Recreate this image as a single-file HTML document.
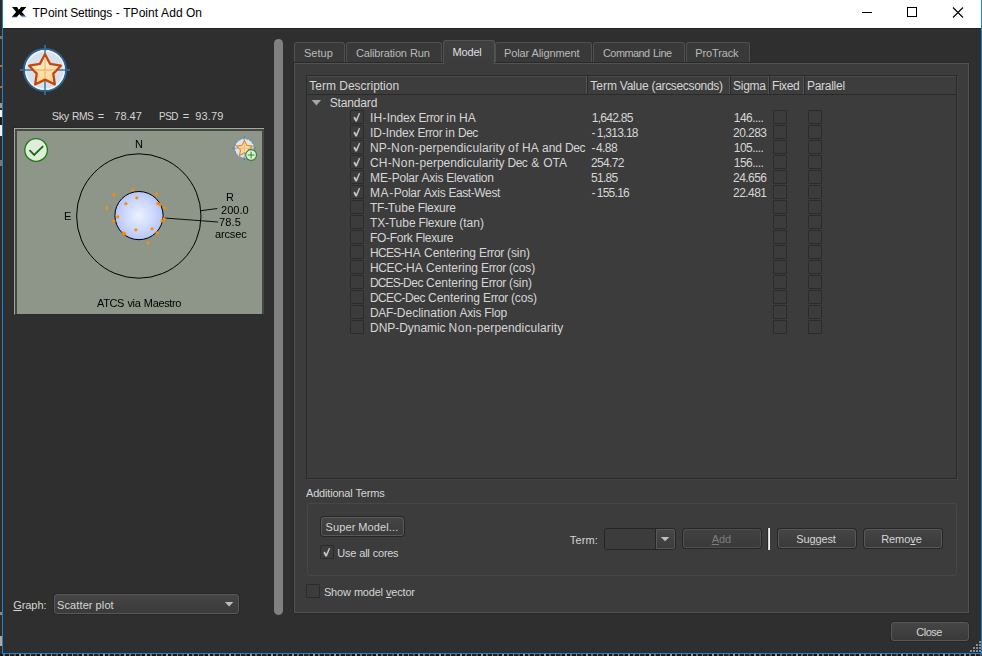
<!DOCTYPE html>
<html><head><meta charset="utf-8"><title>TPoint Settings</title>
<style>
html,body{margin:0;padding:0;}
body{width:982px;height:656px;position:relative;overflow:hidden;background:#2b2b2b;font-family:"Liberation Sans",sans-serif;font-size:12px;}
.a{position:absolute;box-sizing:border-box;}
.t{position:absolute;white-space:pre;line-height:16px;height:16px;font-size:12px;}
.t u{text-decoration:underline;text-underline-offset:1px;}
#win{left:2px;top:0;width:980px;height:654px;background:#2f2f2f;border:1px solid #1883d7;border-top:none;}
#title{left:3px;top:0;width:978px;height:28px;background:#ffffff;box-shadow:0 1px 0 #232323;}
.tab{background:#393939;border:1px solid #505050;border-bottom:none;border-radius:3px 3px 0 0;top:42px;height:20px;}
.tab.sel{background:linear-gradient(#404040,#3c3c3c);top:40px;height:24px;border-color:#545454;}
#pane{left:294px;top:63px;width:675px;height:550px;background:#3c3c3c;border:1px solid #525252;box-shadow:0 0 0 1px #292929;}
#tree{left:306px;top:75px;width:651px;height:404px;background:#3c3c3c;border:1px solid #2a2a2a;box-shadow:1px 1px 0 #434343;}
#hdr{left:307px;top:76px;width:649px;height:18px;background:#3d3d3d;border-top:1px solid #4b4b4b;}
#hdrline{left:307px;top:94px;width:649px;height:1px;background:#2a2a2a;}
.sep{top:76px;width:1px;height:18px;background:#2a2a2a;box-shadow:-1px 0 0 #555555;}
.cb{width:14px;height:14px;background:#3c3c3c;border:1px solid #2b2b2b;border-radius:1px;}
.btn{background:linear-gradient(#454545,#3a3a3a);border:1px solid #585858;border-radius:3px;box-shadow:0 0 0 1px #272727;width:78px;height:19px;}
.btn.dis{border-color:#4f4f4f;background:linear-gradient(#414141,#3a3a3a);}
#grp{left:307px;top:503px;width:650px;height:73px;border:1px solid #474747;border-radius:3px;}
#split{left:274px;top:39px;width:9px;height:576px;background:#808080;border-radius:4.5px;}
#plot{left:14px;top:128px;width:250px;height:187px;background:#434843;border-left:1px solid #a2a99e;border-top:1px solid #a2a99e;box-shadow:-1px -1px 0 #292929;border-bottom:1px solid #2b2d2a;}
#plot2{left:17px;top:131px;width:245px;height:183px;background:#8e968a;}
.combo{background:linear-gradient(#454545,#3a3a3a);border:1px solid #585858;border-radius:3px;box-shadow:0 0 0 1px #272727;}
.ecombo{background:#3c3c3c;border:1px solid #252525;border-radius:3px;}
.dd{background:linear-gradient(#474747,#3c3c3c);border:1px solid #585858;border-radius:0 2px 2px 0;}
svg{position:absolute;overflow:visible;}
#lstrip{left:0;top:0;width:2px;height:654px;background:linear-gradient(to bottom,#2b2b2b 0,#2b2b2b 36px,#777 36px,#777 39px,#2b2b2b 39px,#2b2b2b 65px,#b06a30 65px,#b06a30 67px,#2b2b2b 67px,#2b2b2b 86px,#b06a30 86px,#b06a30 88px,#2b2b2b 88px,#2b2b2b 103px,#999 103px,#999 108px,#2b2b2b 108px,#2b2b2b 110px,#f2f2f2 110px,#f2f2f2 117px,#1c1c1c 117px,#1c1c1c 125px,#f2f2f2 125px,#f2f2f2 136px,#2b2b2b 136px,#2b2b2b 160px,#777 160px,#777 166px,#2b2b2b 166px,#2b2b2b 612px,#888 612px,#888 615px,#2b2b2b 615px,#2b2b2b 636px,#aaa 636px,#aaa 646px,#2b2b2b 646px);}
#bstrip{left:0;top:654px;width:982px;height:2px;background:repeating-linear-gradient(90deg,#141414 0,#141414 3px,#707070 3px,#707070 5px,#1a1a1a 5px,#1a1a1a 9px,#8c8c8c 9px,#8c8c8c 10px,#222 10px,#222 14px,#555 14px,#555 16px,#101010 16px,#101010 19px,#9a9a9a 19px,#9a9a9a 21px);}
.g{will-change:transform;}

</style></head>
<body>
<div class="a" id="win"></div>
<div class="a" id="lstrip"></div><div class="a" id="bstrip"></div>
<div class="a" id="title"></div>
<!-- title icon + buttons -->
<svg style="left:0;top:0" width="982" height="28" viewBox="0 0 982 28">
  <defs><linearGradient id="gx" x1="0" y1="7" x2="0" y2="17.3" gradientUnits="userSpaceOnUse"><stop offset="0" stop-color="#000"/><stop offset="0.62" stop-color="#000"/><stop offset="0.78" stop-color="#14143c"/><stop offset="0.9" stop-color="#6a8fd2"/><stop offset="1" stop-color="#8db0dc"/></linearGradient>
  <linearGradient id="gx2" x1="0" y1="7" x2="0" y2="17.3" gradientUnits="userSpaceOnUse"><stop offset="0" stop-color="#000"/><stop offset="0.85" stop-color="#000"/><stop offset="1" stop-color="#4060a8"/></linearGradient></defs>
  <path d="M12 7 L17.1 7 L18.9 9.9 L21.3 7 L26.1 7 L21.8 12.1 L26.6 17.2 L22.1 17.2 L19.1 13.9 L16.7 17.2 L11.7 17.2 L16.2 12.1 Z" fill="url(#gx)"/>
  <path d="M18.9 9.9 L21.3 7 L26.1 7 L21.8 12.1 L19.1 13.9 L16.7 17.2 L11.7 17.2 L16.2 12.1 Z" fill="url(#gx2)"/>
  <path d="M862 12.5 H872" stroke="#000" stroke-width="1"/>
  <rect x="907.5" y="7.5" width="9" height="9" fill="none" stroke="#000" stroke-width="1"/>
  <path d="M953 7.5 L963 17.5 M963 7.5 L953 17.5" stroke="#000" stroke-width="1.1"/>
</svg>
<!-- left icon -->
<svg style="left:19px;top:44px" width="52" height="52" viewBox="-26 -26 52 52">
  <defs>
  <linearGradient id="gs" x1="0" y1="0" x2="0" y2="1"><stop offset="0" stop-color="#fff3e0"/><stop offset="1" stop-color="#ffd490"/></linearGradient></defs>
  <path d="M0 -25 V25 M-25 0 H25" stroke="#3f78a5" stroke-width="1.5"/>
  <circle cx="0" cy="0" r="21" fill="#d6e3ee" stroke="#2e6492" stroke-width="2"/>
  <circle cx="0" cy="0" r="19.2" fill="none" stroke="#f6f9fc" stroke-width="1.2"/>
  <path d="M0 -20 V20 M-20 0 H20" stroke="#3f78a5" stroke-width="1.5"/>
  <path d="M0.00 -15.80 L5.11 -6.14 L15.88 -4.26 L8.27 3.59 L9.82 14.41 L0.00 9.60 L-9.82 14.41 L-8.27 3.59 L-15.88 -4.26 L-5.11 -6.14 Z" fill="url(#gs)" stroke="#c9460a" stroke-width="2.3" stroke-linejoin="round"/>
  <path d="M0 -11 V7.5 M-10.5 0 H10.5" stroke="#f3b25e" stroke-width="1.3" opacity="0.85"/>
</svg>
<!-- splitter -->
<div class="a" id="split"></div>
<!-- plot -->
<div class="a" id="plot"></div><div class="a" id="plot2"></div>
<svg style="left:0;top:0" width="982" height="656" viewBox="0 0 982 656">
  <defs><radialGradient id="gb" cx="50%" cy="50%" r="50%"><stop offset="0" stop-color="#ebf1fe"/><stop offset="0.55" stop-color="#d0dbfc"/><stop offset="1" stop-color="#b6c5f7"/></radialGradient></defs>
  <circle cx="138.8" cy="216" r="62.2" fill="none" stroke="#000" stroke-width="1"/>
  <circle cx="139" cy="215.6" r="24.1" fill="url(#gb)" stroke="#000" stroke-width="1"/>
  <path d="M201 210.7 L217.3 208.5 M164.4 218 L218 222" stroke="#000" stroke-width="0.9" fill="none"/>
  <g fill="#ff8c00">
   <circle cx="132.7" cy="189.8" r="1.6"/><circle cx="113.9" cy="194.9" r="1.6"/><circle cx="156.8" cy="193.9" r="1.6"/>
   <circle cx="136.8" cy="197.8" r="1.6"/><circle cx="125.9" cy="203.7" r="1.6"/><circle cx="157.8" cy="203.4" r="1.6"/><circle cx="159.6" cy="204.6" r="1.6"/>
   <circle cx="164.9" cy="207.8" r="1.6"/><circle cx="106.8" cy="208" r="1.6"/><circle cx="117.8" cy="216.8" r="1.6"/>
   <circle cx="113.9" cy="221" r="1.6"/><circle cx="164.1" cy="218.8" r="1.6"/><circle cx="162" cy="221" r="1.6"/>
   <circle cx="135.9" cy="229.8" r="1.6"/><circle cx="152" cy="228.8" r="1.6"/><circle cx="157.1" cy="232.9" r="1.6"/>
   <circle cx="123.6" cy="232.8" r="1.6"/><circle cx="124.8" cy="233.8" r="1.6"/><circle cx="147.8" cy="242.9" r="1.6"/>
  </g>
  <!-- check icon -->
  <circle cx="36.1" cy="150" r="11.3" fill="#dfeedb" stroke="#1f7a12" stroke-width="1.3"/>
  <path d="M29.5 150.2 L34.2 155 L43.2 146.2" fill="none" stroke="#146b0a" stroke-width="1.8"/>
  <!-- small star icon -->
  <g transform="translate(244.4,148.3)">
   <path d="M0 -12.5 V12 M-12.2 0 H11.5" stroke="#4a82b0" stroke-width="0.9"/>
   <circle cx="0" cy="0" r="9.7" fill="#dbe6f0" stroke="#5c90bc" stroke-width="1" stroke-dasharray="2.4 1.2"/>
   <path d="M0 -9.4 V9.4 M-9.4 0 H9.4" stroke="#7aa4c8" stroke-width="0.8"/>
   <path d="M0.00 -7.90 L2.41 -2.92 L7.89 -2.16 L3.90 1.67 L4.88 7.11 L0.00 4.50 L-4.88 7.11 L-3.90 1.67 L-7.89 -2.16 L-2.41 -2.92 Z" fill="#ffdfb4" stroke="#e9821e" stroke-width="1.1" stroke-linejoin="round"/>
   <path d="M0 -5.5 V3.6 M-5.5 0 H5.5" stroke="#f5b468" stroke-width="0.9"/>
   <circle cx="6.7" cy="6.7" r="5.4" fill="#dcedd8" stroke="#2c8222" stroke-width="1.1"/>
   <path d="M6.7 3.4 V10 M3.4 6.7 H10" stroke="#2f8a24" stroke-width="1"/>
  </g>
</svg>
<!-- graph combo -->
<div class="a combo" style="left:54px;top:594px;width:185px;height:20px;"></div>
<svg style="left:0;top:0" width="982" height="656"><path d="M224.9 602 H233.3 L229.1 606.4 Z" fill="#bdbdbd"/></svg>
<!-- tabs -->
<div class="a tab" style="left:294px;width:51px;"></div>
<div class="a tab" style="left:346px;width:96px;"></div>
<div class="a tab" style="left:495px;width:97px;"></div>
<div class="a tab" style="left:593px;width:92px;"></div>
<div class="a tab" style="left:686px;width:64px;"></div>
<div class="a" id="pane"></div>
<div class="a tab sel" style="left:443px;width:52px;"></div>
<!-- tree -->
<div class="a" id="tree"></div>
<div class="a" id="hdr"></div><div class="a" id="hdrline"></div>
<div class="a sep" style="left:587px"></div>
<div class="a sep" style="left:730px"></div>
<div class="a sep" style="left:769px"></div>
<div class="a sep" style="left:804px"></div>
<svg style="left:0;top:0" width="982" height="656"><path d="M311.7 100 H321.1 L316.4 105.4 Z" fill="#a6a6a6"/></svg>
<div class="a cb on" style="left:350px;top:110px"></div>
<svg style="left:350px;top:110px" width="14" height="14" viewBox="0 0 14 14"><path d="M3.4 7.7 L4.9 6.5 L6.2 9.0 L8.9 3.0 L10.2 3.3 L6.9 11.6 L5.4 11.6 Z" fill="#c6c6c6"/></svg>
<div class="a cb" style="left:773px;top:110px"></div>
<div class="a cb" style="left:808px;top:110px"></div>
<div class="a cb on" style="left:350px;top:125px"></div>
<svg style="left:350px;top:125px" width="14" height="14" viewBox="0 0 14 14"><path d="M3.4 7.7 L4.9 6.5 L6.2 9.0 L8.9 3.0 L10.2 3.3 L6.9 11.6 L5.4 11.6 Z" fill="#c6c6c6"/></svg>
<div class="a cb" style="left:773px;top:125px"></div>
<div class="a cb" style="left:808px;top:125px"></div>
<div class="a cb on" style="left:350px;top:140px"></div>
<svg style="left:350px;top:140px" width="14" height="14" viewBox="0 0 14 14"><path d="M3.4 7.7 L4.9 6.5 L6.2 9.0 L8.9 3.0 L10.2 3.3 L6.9 11.6 L5.4 11.6 Z" fill="#c6c6c6"/></svg>
<div class="a cb" style="left:773px;top:140px"></div>
<div class="a cb" style="left:808px;top:140px"></div>
<div class="a cb on" style="left:350px;top:155px"></div>
<svg style="left:350px;top:155px" width="14" height="14" viewBox="0 0 14 14"><path d="M3.4 7.7 L4.9 6.5 L6.2 9.0 L8.9 3.0 L10.2 3.3 L6.9 11.6 L5.4 11.6 Z" fill="#c6c6c6"/></svg>
<div class="a cb" style="left:773px;top:155px"></div>
<div class="a cb" style="left:808px;top:155px"></div>
<div class="a cb on" style="left:350px;top:170px"></div>
<svg style="left:350px;top:170px" width="14" height="14" viewBox="0 0 14 14"><path d="M3.4 7.7 L4.9 6.5 L6.2 9.0 L8.9 3.0 L10.2 3.3 L6.9 11.6 L5.4 11.6 Z" fill="#c6c6c6"/></svg>
<div class="a cb" style="left:773px;top:170px"></div>
<div class="a cb" style="left:808px;top:170px"></div>
<div class="a cb on" style="left:350px;top:185px"></div>
<svg style="left:350px;top:185px" width="14" height="14" viewBox="0 0 14 14"><path d="M3.4 7.7 L4.9 6.5 L6.2 9.0 L8.9 3.0 L10.2 3.3 L6.9 11.6 L5.4 11.6 Z" fill="#c6c6c6"/></svg>
<div class="a cb" style="left:773px;top:185px"></div>
<div class="a cb" style="left:808px;top:185px"></div>
<div class="a cb" style="left:350px;top:200px"></div>
<div class="a cb" style="left:773px;top:200px"></div>
<div class="a cb" style="left:808px;top:200px"></div>
<div class="a cb" style="left:350px;top:215px"></div>
<div class="a cb" style="left:773px;top:215px"></div>
<div class="a cb" style="left:808px;top:215px"></div>
<div class="a cb" style="left:350px;top:230px"></div>
<div class="a cb" style="left:773px;top:230px"></div>
<div class="a cb" style="left:808px;top:230px"></div>
<div class="a cb" style="left:350px;top:245px"></div>
<div class="a cb" style="left:773px;top:245px"></div>
<div class="a cb" style="left:808px;top:245px"></div>
<div class="a cb" style="left:350px;top:260px"></div>
<div class="a cb" style="left:773px;top:260px"></div>
<div class="a cb" style="left:808px;top:260px"></div>
<div class="a cb" style="left:350px;top:275px"></div>
<div class="a cb" style="left:773px;top:275px"></div>
<div class="a cb" style="left:808px;top:275px"></div>
<div class="a cb" style="left:350px;top:290px"></div>
<div class="a cb" style="left:773px;top:290px"></div>
<div class="a cb" style="left:808px;top:290px"></div>
<div class="a cb" style="left:350px;top:305px"></div>
<div class="a cb" style="left:773px;top:305px"></div>
<div class="a cb" style="left:808px;top:305px"></div>
<div class="a cb" style="left:350px;top:320px"></div>
<div class="a cb" style="left:773px;top:320px"></div>
<div class="a cb" style="left:808px;top:320px"></div>
<div class="a" id="grp"></div>
<div class="a btn" style="left:321px;top:517px;width:83px"></div>
<div class="a cb on" style="left:320px;top:545px"></div><svg style="left:320px;top:545px" width="14" height="14" viewBox="0 0 14 14"><path d="M3.4 7.7 L4.9 6.5 L6.2 9.0 L8.9 3.0 L10.2 3.3 L6.9 11.6 L5.4 11.6 Z" fill="#c6c6c6"/></svg>
<div class="a cb" style="left:306px;top:584px"></div>
<div class="a ecombo" style="left:604px;top:528px;width:72px;height:22px"></div>
<div class="a dd" style="left:656px;top:529px;width:19px;height:20px"></div>
<div class="a" style="left:655px;top:529px;width:1px;height:20px;background:#252525"></div>
<svg style="left:0;top:0" width="982" height="656"><path d="M660.8 536.9 H669.3 L665.05 541.3 Z" fill="#c0c0c0"/></svg>
<div class="a btn dis" style="left:683px;top:529px"></div>
<div class="a" style="left:767px;top:528px;width:1px;height:22px;background:#2a2a2a"></div>
<div class="a" style="left:768px;top:528px;width:2px;height:22px;background:#f2f2f2;border-left:1px solid #cfcfcf;box-sizing:border-box"></div>
<div class="a btn" style="left:778px;top:529px"></div>
<div class="a btn" style="left:864px;top:529px"></div>
<div class="a btn" style="left:891px;top:622px"></div>
<svg style="left:0;top:0" width="982" height="656"><rect x="979" y="641" width="2" height="2" fill="#8a8a8a"/><rect x="976" y="644" width="2" height="2" fill="#8a8a8a"/><rect x="979" y="644" width="2" height="2" fill="#8a8a8a"/><rect x="973" y="647" width="2" height="2" fill="#8a8a8a"/><rect x="976" y="647" width="2" height="2" fill="#8a8a8a"/><rect x="979" y="647" width="2" height="2" fill="#8a8a8a"/><rect x="970" y="650" width="2" height="2" fill="#8a8a8a"/><rect x="973" y="650" width="2" height="2" fill="#8a8a8a"/><rect x="976" y="650" width="2" height="2" fill="#8a8a8a"/><rect x="979" y="650" width="2" height="2" fill="#8a8a8a"/></svg>

<!-- text -->
<span class="t" style="left:51.75px;top:108.0px;color:#d6d6d6;letter-spacing:-0.421px;font-size:11px;">Sky</span>
<span class="t" style="transform:scaleX(0.936);transform-origin:0 50%;left:71.50px;top:108.0px;color:#d6d6d6;letter-spacing:-0.500px;font-size:11px;">RMS</span>
<span class="t" style="left:97.75px;top:108.0px;color:#d6d6d6;font-size:11px;">=</span>
<span class="t" style="left:114.25px;top:108.0px;color:#d6d6d6;letter-spacing:0.025px;font-size:11px;">78.47</span>
<span class="t" style="transform:scaleX(0.897);transform-origin:0 50%;left:158.50px;top:108.0px;color:#d6d6d6;letter-spacing:-0.500px;font-size:11px;">PSD</span>
<span class="t" style="left:182.75px;top:108.0px;color:#d6d6d6;font-size:11px;">=</span>
<span class="t" style="left:195.25px;top:108.0px;color:#d6d6d6;letter-spacing:0.121px;font-size:11px;">93.79</span>
<span class="t" style="left:13.25px;top:597.0px;color:#d6d6d6;letter-spacing:-0.085px;font-size:11px;"><u>G</u>raph:</span>
<span class="t" style="left:57.00px;top:597.0px;color:#d6d6d6;letter-spacing:0.115px;word-spacing:-0.231px;font-size:11px;">Scatter plot</span>
<span class="t" style="left:304.00px;top:45.0px;color:#b9b9b9;letter-spacing:0.014px;font-size:11px;">Setup</span>
<span class="t" style="left:356.00px;top:45.0px;color:#b9b9b9;letter-spacing:-0.161px;word-spacing:0.321px;font-size:11px;">Calibration Run</span>
<span class="t" style="left:452.50px;top:44.0px;color:#e0e0e0;letter-spacing:-0.171px;font-size:11px;">Model</span>
<span class="t" style="left:504.00px;top:45.0px;color:#b9b9b9;letter-spacing:-0.132px;word-spacing:0.265px;font-size:11px;">Polar Alignment</span>
<span class="t" style="transform:scaleX(0.986);transform-origin:0 50%;left:603.25px;top:45.0px;color:#b9b9b9;letter-spacing:-0.500px;word-spacing:1.000px;font-size:11px;">Command Line</span>
<span class="t" style="left:695.25px;top:45.0px;color:#b9b9b9;letter-spacing:-0.135px;font-size:11px;">ProTrack</span>
<span class="t" style="left:306.00px;top:485.0px;color:#d6d6d6;letter-spacing:-0.181px;word-spacing:0.361px;font-size:11px;">Additional Terms</span>
<span class="t" style="left:325.50px;top:519.0px;color:#d6d6d6;letter-spacing:0.109px;word-spacing:-0.217px;font-size:11px;">Super Model...</span>
<span class="t" style="left:337.25px;top:545.0px;color:#d6d6d6;letter-spacing:-0.278px;word-spacing:0.556px;font-size:11px;">Use all cores</span>
<span class="t" style="transform:scaleX(0.996);transform-origin:0 50%;left:323.75px;top:584.0px;color:#d6d6d6;letter-spacing:-0.186px;word-spacing:0.371px;font-size:11px;">Show model <u>v</u>ector</span>
<span class="t" style="left:569.75px;top:532.0px;color:#d6d6d6;letter-spacing:0.137px;font-size:11px;">Term:</span>
<span class="t" style="left:711.75px;top:531.0px;color:#7d7d7d;letter-spacing:-0.089px;font-size:11px;"><u>A</u>dd</span>
<span class="t" style="left:796.25px;top:531.0px;color:#d6d6d6;letter-spacing:-0.128px;font-size:11px;">Su<u>g</u>gest</span>
<span class="t" style="left:881.25px;top:531.0px;color:#d6d6d6;letter-spacing:-0.097px;font-size:11px;">Remo<u>v</u>e</span>
<span class="t" style="left:916.25px;top:624.0px;color:#d6d6d6;letter-spacing:-0.471px;font-size:11px;">Close</span>
<span class="t g" style="left:134.75px;top:136.0px;color:#000;font-size:11px;">N</span>
<span class="t g" style="left:63.50px;top:208.0px;color:#000;font-size:11px;">E</span>
<span class="t g" style="left:225.75px;top:189.0px;color:#000;font-size:11px;">R</span>
<span class="t g" style="left:221.25px;top:202.0px;color:#000;letter-spacing:0.037px;font-size:11px;">200.0</span>
<span class="t g" style="left:219.00px;top:214.0px;color:#000;letter-spacing:0.150px;font-size:11px;">78.5</span>
<span class="t g" style="left:214.50px;top:226.0px;color:#000;letter-spacing:-0.154px;font-size:11px;">arcsec</span>
<span class="t g" style="left:97.00px;top:295.0px;color:#000;letter-spacing:-0.364px;word-spacing:0.727px;font-size:11px;">ATCS via Maestro</span>
<span class="t" style="left:32.5px;top:5px;color:#000000;letter-spacing:0.031px;">TPoint</span>
<span class="t" style="left:70.25px;top:5px;color:#000000;letter-spacing:-0.188px;">Settings</span>
<span class="t" style="left:115.75px;top:5px;color:#000000;">-</span>
<span class="t" style="left:123.25px;top:5px;color:#000000;letter-spacing:0.031px;">TPoint</span>
<span class="t" style="left:161px;top:5px;color:#000000;letter-spacing:0.188px;">Add</span>
<span class="t" style="left:186px;top:5px;color:#000000;letter-spacing:-0.036px;">On</span>
<span class="t" style="left:309.25px;top:78px;color:#d6d6d6;letter-spacing:0.063px;">Term</span>
<span class="t" style="left:339.25px;top:78px;color:#d6d6d6;letter-spacing:-0.018px;">Description</span>
<span class="t" style="left:590.25px;top:78px;color:#d6d6d6;letter-spacing:-0.006px;">Term</span>
<span class="t" style="left:619.75px;top:78px;color:#d6d6d6;letter-spacing:-0.238px;">Value</span>
<span class="t" style="left:651.5px;top:78px;color:#d6d6d6;letter-spacing:-0.331px;">(arcsecsonds)</span>
<span class="t" style="left:733px;top:78px;color:#d6d6d6;letter-spacing:-0.243px;">Sigma</span>
<span class="t" style="left:772px;top:78px;color:#d6d6d6;letter-spacing:-0.437px;">Fixed</span>
<span class="t" style="left:807px;top:78px;color:#d6d6d6;letter-spacing:-0.279px;">Parallel</span>
<span class="t" style="left:329.75px;top:95px;color:#d6d6d6;letter-spacing:-0.157px;">Standard</span>
<span class="t" style="left:370px;top:110px;color:#d6d6d6;letter-spacing:0.275px;">IH-</span>
<span class="t" style="left:386.75px;top:110px;color:#d6d6d6;letter-spacing:-0.132px;">Index</span>
<span class="t" style="left:418.5px;top:110px;color:#d6d6d6;letter-spacing:-0.386px;">Error</span>
<span class="t" style="left:446.25px;top:110px;color:#d6d6d6;letter-spacing:0.277px;">in</span>
<span class="t" style="left:459px;top:110px;color:#d6d6d6;letter-spacing:0.077px;">HA</span>
<span class="t" style="left:591.75px;top:110px;color:#d6d6d6;letter-spacing:-0.734px;">1,642.85</span>
<span class="t" style="left:733.75px;top:110px;color:#d6d6d6;letter-spacing:-0.544px;">146....</span>
<span class="t" style="left:370px;top:125px;color:#d6d6d6;letter-spacing:-0.054px;">ID-</span>
<span class="t" style="left:385.75px;top:125px;color:#d6d6d6;letter-spacing:-0.130px;">Index</span>
<span class="t" style="left:417.5px;top:125px;color:#d6d6d6;letter-spacing:-0.385px;">Error</span>
<span class="t" style="left:445.25px;top:125px;color:#d6d6d6;letter-spacing:0.278px;">in</span>
<span class="t" style="left:458px;top:125px;color:#d6d6d6;letter-spacing:-0.515px;">Dec</span>
<span class="t" style="left:591.5px;top:125px;color:#d6d6d6;">-</span>
<span class="t" style="left:596.75px;top:125px;color:#d6d6d6;letter-spacing:-0.706px;">1,313.18</span>
<span class="t" style="left:733px;top:125px;color:#d6d6d6;letter-spacing:-0.534px;">20.283</span>
<span class="t" style="left:370px;top:140px;color:#d6d6d6;letter-spacing:0.106px;">NP-</span>
<span class="t" style="left:391px;top:140px;color:#d6d6d6;letter-spacing:0.493px;">Non-</span>
<span class="t" style="left:419px;top:140px;color:#d6d6d6;letter-spacing:0.078px;">perpendicularity</span>
<span class="t" style="left:508px;top:140px;color:#d6d6d6;letter-spacing:0.490px;">of</span>
<span class="t" style="left:522px;top:140px;color:#d6d6d6;letter-spacing:0.160px;">HA</span>
<span class="t" style="left:542px;top:140px;color:#d6d6d6;letter-spacing:-0.014px;">and</span>
<span class="t" style="left:565px;top:140px;color:#d6d6d6;letter-spacing:-0.451px;">Dec</span>
<span class="t" style="left:591.5px;top:140px;color:#d6d6d6;">-</span>
<span class="t" style="left:596px;top:140px;color:#d6d6d6;letter-spacing:-0.590px;">4.88</span>
<span class="t" style="left:733.75px;top:140px;color:#d6d6d6;letter-spacing:-0.544px;">105....</span>
<span class="t" style="left:370px;top:155px;color:#d6d6d6;letter-spacing:0.147px;">CH-</span>
<span class="t" style="left:391.75px;top:155px;color:#d6d6d6;letter-spacing:0.422px;">Non-</span>
<span class="t" style="left:419.5px;top:155px;color:#d6d6d6;letter-spacing:0.023px;">perpendicularity</span>
<span class="t" style="left:507.5px;top:155px;color:#d6d6d6;letter-spacing:-0.518px;">Dec</span>
<span class="t" style="left:531.25px;top:155px;color:#d6d6d6;">&amp;</span>
<span class="t" style="left:543.25px;top:155px;color:#d6d6d6;letter-spacing:-0.012px;">OTA</span>
<span class="t" style="left:591px;top:155px;color:#d6d6d6;letter-spacing:-0.651px;">254.72</span>
<span class="t" style="left:733.75px;top:155px;color:#d6d6d6;letter-spacing:-0.544px;">156....</span>
<span class="t" style="left:370px;top:170px;color:#d6d6d6;letter-spacing:-0.065px;">ME-</span>
<span class="t" style="left:391.75px;top:170px;color:#d6d6d6;letter-spacing:-0.251px;">Polar</span>
<span class="t" style="left:421.5px;top:170px;color:#d6d6d6;letter-spacing:-0.216px;">Axis</span>
<span class="t" style="left:446.25px;top:170px;color:#d6d6d6;letter-spacing:-0.200px;">Elevation</span>
<span class="t" style="left:591px;top:170px;color:#d6d6d6;letter-spacing:-0.686px;">51.85</span>
<span class="t" style="left:733px;top:170px;color:#d6d6d6;letter-spacing:-0.534px;">24.656</span>
<span class="t" style="left:370px;top:185px;color:#d6d6d6;letter-spacing:0.612px;">MA-</span>
<span class="t" style="left:393.75px;top:185px;color:#d6d6d6;letter-spacing:-0.240px;">Polar</span>
<span class="t" style="left:423.75px;top:185px;color:#d6d6d6;letter-spacing:-0.206px;">Axis</span>
<span class="t" style="left:448.5px;top:185px;color:#d6d6d6;letter-spacing:-0.439px;">East-</span>
<span class="t" style="left:474.25px;top:185px;color:#d6d6d6;letter-spacing:-0.326px;">West</span>
<span class="t" style="left:591.5px;top:185px;color:#d6d6d6;">-</span>
<span class="t" style="left:596.75px;top:185px;color:#d6d6d6;letter-spacing:-0.742px;">155.16</span>
<span class="t" style="left:733px;top:185px;color:#d6d6d6;letter-spacing:-0.534px;">22.481</span>
<span class="t" style="left:370px;top:200px;color:#d6d6d6;letter-spacing:-0.261px;">TF-</span>
<span class="t" style="left:387.75px;top:200px;color:#d6d6d6;letter-spacing:-0.024px;">Tube</span>
<span class="t" style="left:417.75px;top:200px;color:#d6d6d6;letter-spacing:-0.326px;">Flexure</span>
<span class="t" style="left:370px;top:215px;color:#d6d6d6;letter-spacing:-0.170px;">TX-</span>
<span class="t" style="left:388.75px;top:215px;color:#d6d6d6;letter-spacing:-0.035px;">Tube</span>
<span class="t" style="left:418.5px;top:215px;color:#d6d6d6;letter-spacing:-0.335px;">Flexure</span>
<span class="t" style="left:459.25px;top:215px;color:#d6d6d6;letter-spacing:0.019px;">(tan)</span>
<span class="t" style="left:370px;top:230px;color:#d6d6d6;letter-spacing:-0.280px;">FO-</span>
<span class="t" style="left:389.75px;top:230px;color:#d6d6d6;letter-spacing:-0.298px;">Fork</span>
<span class="t" style="left:415.5px;top:230px;color:#d6d6d6;letter-spacing:-0.333px;">Flexure</span>
<span class="t" style="left:370px;top:245px;color:#d6d6d6;letter-spacing:-0.669px;">HCES-</span>
<span class="t" style="left:404px;top:245px;color:#d6d6d6;letter-spacing:0.164px;">HA</span>
<span class="t" style="left:424px;top:245px;color:#d6d6d6;letter-spacing:-0.003px;">Centering</span>
<span class="t" style="left:479px;top:245px;color:#d6d6d6;letter-spacing:-0.334px;">Error</span>
<span class="t" style="left:507px;top:245px;color:#d6d6d6;letter-spacing:-0.069px;">(sin)</span>
<span class="t" style="left:370px;top:260px;color:#d6d6d6;letter-spacing:-0.400px;">HCEC-</span>
<span class="t" style="left:406px;top:260px;color:#d6d6d6;letter-spacing:0.164px;">HA</span>
<span class="t" style="left:426px;top:260px;color:#d6d6d6;letter-spacing:-0.003px;">Centering</span>
<span class="t" style="left:481px;top:260px;color:#d6d6d6;letter-spacing:-0.334px;">Error</span>
<span class="t" style="left:509px;top:260px;color:#d6d6d6;letter-spacing:-0.134px;">(cos)</span>
<span class="t" style="left:370px;top:275px;color:#d6d6d6;letter-spacing:-0.869px;">DCES-</span>
<span class="t" style="left:403px;top:275px;color:#d6d6d6;letter-spacing:-0.448px;">Dec</span>
<span class="t" style="left:426px;top:275px;color:#d6d6d6;letter-spacing:-0.003px;">Centering</span>
<span class="t" style="left:481px;top:275px;color:#d6d6d6;letter-spacing:-0.334px;">Error</span>
<span class="t" style="left:509px;top:275px;color:#d6d6d6;letter-spacing:-0.069px;">(sin)</span>
<span class="t" style="left:370px;top:290px;color:#d6d6d6;letter-spacing:-0.604px;">DCEC-</span>
<span class="t" style="left:405px;top:290px;color:#d6d6d6;letter-spacing:-0.452px;">Dec</span>
<span class="t" style="left:428px;top:290px;color:#d6d6d6;letter-spacing:-0.007px;">Centering</span>
<span class="t" style="left:483px;top:290px;color:#d6d6d6;letter-spacing:-0.337px;">Error</span>
<span class="t" style="left:511px;top:290px;color:#d6d6d6;letter-spacing:-0.137px;">(cos)</span>
<span class="t" style="left:370px;top:305px;color:#d6d6d6;letter-spacing:-0.294px;">DAF-</span>
<span class="t" style="left:396.75px;top:305px;color:#d6d6d6;letter-spacing:0.021px;">Declination</span>
<span class="t" style="left:459.5px;top:305px;color:#d6d6d6;letter-spacing:-0.204px;">Axis</span>
<span class="t" style="left:484.25px;top:305px;color:#d6d6d6;letter-spacing:-0.123px;">Flop</span>
<span class="t" style="left:370px;top:320px;color:#d6d6d6;letter-spacing:-0.037px;">DNP-</span>
<span class="t" style="left:399.25px;top:320px;color:#d6d6d6;letter-spacing:-0.054px;">Dynamic</span>
<span class="t" style="left:448.5px;top:320px;color:#d6d6d6;letter-spacing:0.543px;">Non-</span>
<span class="t" style="left:476.75px;top:320px;color:#d6d6d6;letter-spacing:0.116px;">perpendicularity</span>
</body></html>
